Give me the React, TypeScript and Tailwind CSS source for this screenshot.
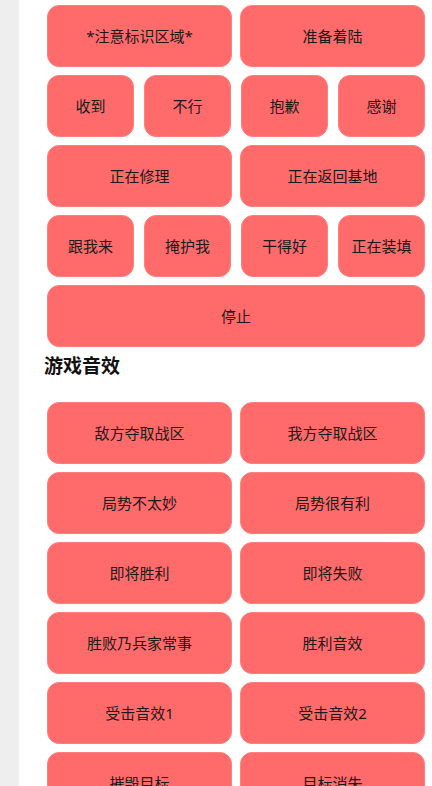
import React from 'react';

const voiceRows: string[][] = [
  ['*注意标识区域*', '准备着陆'],
  ['收到', '不行', '抱歉', '感谢'],
  ['正在修理', '正在返回基地'],
  ['跟我来', '掩护我', '干得好', '正在装填'],
  ['停止'],
];

const gameSounds = [
  '敌方夺取战区',
  '我方夺取战区',
  '局势不太妙',
  '局势很有利',
  '即将胜利',
  '即将失败',
  '胜败乃兵家常事',
  '胜利音效',
  '受击音效1',
  '受击音效2',
  '摧毁目标',
  '目标消失',
];

const SoundButton = ({ label }: { label: string }) => (
  <button className="h-[62px] w-full rounded-[12px] bg-[#ff6b6b] text-[15px] text-[#1a1a1a] border border-[#ff7f7f]">
    {label}
  </button>
);

const App: React.FC = () => {
  return (
    <div className="flex min-h-screen" style={{ fontFamily: '"Noto Sans", "Noto Sans CJK SC", sans-serif' }}>
      <div className="w-[19px] shrink-0 bg-[#eeeeee]" />
      <div className="flex-1 bg-white pt-[5px] pl-[25px] pr-[4px]">
        <div className="flex flex-col gap-2 px-[3px]">
          {voiceRows.map((row, i) => (
            <div
              key={i}
              className={
                row.length === 4
                  ? 'grid grid-cols-4 gap-[10px]'
                  : row.length === 2
                  ? 'grid grid-cols-2 gap-2'
                  : 'grid grid-cols-1'
              }
            >
              {row.map((label) => (
                <SoundButton key={label} label={label} />
              ))}
            </div>
          ))}
        </div>

        <h2 className="mt-[5px] mb-[22px] text-[19px] leading-[28px] font-bold text-[#111]">游戏音效</h2>

        <div className="grid grid-cols-2 gap-2 px-[3px] pb-6">
          {gameSounds.map((label) => (
            <SoundButton key={label} label={label} />
          ))}
        </div>
      </div>
    </div>
  );
};

export default App;
